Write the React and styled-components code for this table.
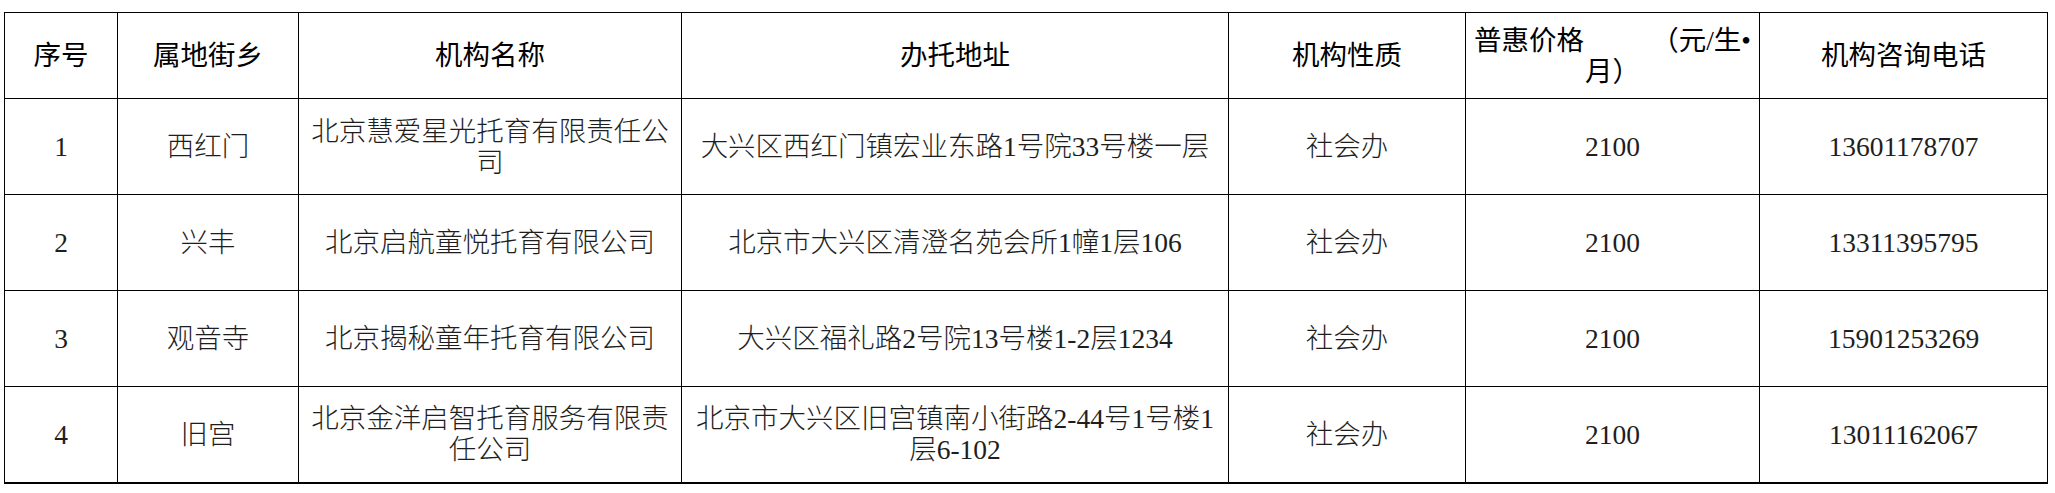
import React from "react";
import styled, { createGlobalStyle } from "styled-components";

const Global = createGlobalStyle`
  html, body { margin: 0; padding: 0; background: #fff; }
  body { font-family: "Liberation Serif", "Noto Sans CJK SC", serif; }
`;

const Page = styled.div`
  padding: 12px 0 0 4px;
`;

const Table = styled.table`
  border-collapse: collapse;
  table-layout: fixed;
  width: 2044px;
  font-family: "Liberation Serif", "Noto Sans CJK SC", serif;
  font-size: 27.5px;
  line-height: 31px;
  border-bottom: 2px solid #000;
`;

const HeadRow = styled.tr`
  height: 86px;
`;

const BodyRow = styled.tr`
  height: 96px;
`;

const HeadCell = styled.th`
  border: 1px solid #000;
  padding: 0 8px;
  font-weight: 400;
  color: #000;
  text-align: center;
  vertical-align: middle;
`;

const Cell = styled.td`
  border: 1px solid #000;
  padding: 0 8px;
  font-weight: 300;
  color: #1e1e1e;
  text-align: center;
  vertical-align: middle;
  word-break: normal;
`;

const PriceHead = styled.div`
  display: flex;
  flex-direction: column;
  align-items: center;
`;

const PriceLine = styled.div`
  display: flex;
  justify-content: space-between;
  align-self: stretch;
`;

const widths = [113, 181, 383, 547, 237, 294, 288];

const rows = [
  ["1", "西红门", "北京慧爱星光托育有限责任公司", "大兴区西红门镇宏业东路1号院33号楼一层", "社会办", "2100", "13601178707"],
  ["2", "兴丰", "北京启航童悦托育有限公司", "北京市大兴区清澄名苑会所1幢1层106", "社会办", "2100", "13311395795"],
  ["3", "观音寺", "北京揭秘童年托育有限公司", "大兴区福礼路2号院13号楼1-2层1234", "社会办", "2100", "15901253269"],
  ["4", "旧宫", "北京金洋启智托育服务有限责任公司", "北京市大兴区旧宫镇南小街路2-44号1号楼1层6-102", "社会办", "2100", "13011162067"],
];

export default function App() {
  return (
    <Page>
      <Global />
      <Table>
        <colgroup>
          {widths.map((w, i) => (
            <col key={i} style={{ width: w }} />
          ))}
        </colgroup>
        <thead>
          <HeadRow>
            <HeadCell>序号</HeadCell>
            <HeadCell>属地街乡</HeadCell>
            <HeadCell>机构名称</HeadCell>
            <HeadCell>办托地址</HeadCell>
            <HeadCell>机构性质</HeadCell>
            <HeadCell>
              <PriceHead>
                <PriceLine>
                  <span>普惠价格</span>
                  <span>（元/生•</span>
                </PriceLine>
                <span>月）</span>
              </PriceHead>
            </HeadCell>
            <HeadCell>机构咨询电话</HeadCell>
          </HeadRow>
        </thead>
        <tbody>
          {rows.map((r) => (
            <BodyRow key={r[0]}>
              {r.map((c, i) => (
                <Cell key={i}>{c}</Cell>
              ))}
            </BodyRow>
          ))}
        </tbody>
      </Table>
    </Page>
  );
}
